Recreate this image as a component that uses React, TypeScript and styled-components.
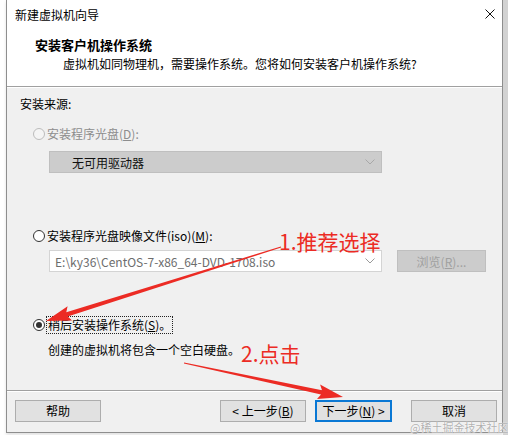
import React from "react";
import styled, { createGlobalStyle } from "styled-components";

const GlobalStyle = createGlobalStyle`
  html, body {
    margin: 0;
    padding: 0;
    background: #ffffff;
  }
  body {
    font-family: "Noto Sans CJK SC", "Noto Sans", sans-serif;
    font-size: 12px;
    color: #000;
  }
`;

type Pt = [number, number];

function arrowPolygon(s: Pt, t: Pt, head = 22, headW = 15, shaft = 4.5): string {
  const dx = t[0] - s[0];
  const dy = t[1] - s[1];
  const len = Math.hypot(dx, dy);
  const ux = dx / len;
  const uy = dy / len;
  const nx = -uy;
  const ny = ux;
  const bx = t[0] - ux * head;
  const by = t[1] - uy * head;
  const wx = bx - ux * 3;
  const wy = by - uy * 3;
  const pts: Pt[] = [
    [s[0] + nx * 0.5, s[1] + ny * 0.5],
    [bx + (nx * shaft) / 2, by + (ny * shaft) / 2],
    [wx + (nx * headW) / 2, wy + (ny * headW) / 2],
    t,
    [wx - (nx * headW) / 2, wy - (ny * headW) / 2],
    [bx - (nx * shaft) / 2, by - (ny * shaft) / 2],
    [s[0] - nx * 0.5, s[1] - ny * 0.5],
  ];
  return pts.map((p) => `${p[0].toFixed(1)},${p[1].toFixed(1)}`).join(" ");
}

export default function App() {
  return (
    <>
      <GlobalStyle />
      <Page>
        <Window>
          <TitleBar>
            <span>新建虚拟机向导</span>
            <CloseIcon width="10" height="10" viewBox="0 0 10 10">
              <path d="M0.5 0.5 L9.5 9.5 M9.5 0.5 L0.5 9.5" stroke="#111" strokeWidth="1" />
            </CloseIcon>
          </TitleBar>
          <Header>
            <Heading>安装客户机操作系统</Heading>
            <SubHeading>虚拟机如同物理机，需要操作系统。您将如何安装客户机操作系统?</SubHeading>
          </Header>
          <Etched />
          <Body>
            <SourceLabel>安装来源:</SourceLabel>

            <RadioRow $mt={14}>
              <Radio $state="disabled" />
              <RadioLabel $disabled>
                安装程序光盘(<u>D</u>):
              </RadioLabel>
            </RadioRow>
            <FieldRow $mt={9}>
              <DisabledSelect>
                <span>无可用驱动器</span>
                <Chevron color="#a8a8a8" />
              </DisabledSelect>
            </FieldRow>

            <RadioRow $mt={55}>
              <Radio $state="off" />
              <RadioLabel>
                安装程序光盘映像文件(iso)(<u>M</u>):
              </RadioLabel>
            </RadioRow>
            <FieldRow $mt={6}>
              <PathCombo>
                <span>E:\ky36\CentOS-7-x86_64-DVD-1708.iso</span>
                <Chevron color="#9a9a9a" />
              </PathCombo>
              <BrowseButton>
                浏览(<u>R</u>)...
              </BrowseButton>
            </FieldRow>

            <RadioRow $mt={45}>
              <Radio $state="on" />
              <FocusLabel>
                稍后安装操作系统(<u>S</u>)。
              </FocusLabel>
            </RadioRow>
            <Description>创建的虚拟机将包含一个空白硬盘。</Description>
          </Body>
          <Etched />
          <Footer>
            <WizardButton>帮助</WizardButton>
            <ButtonGroup>
              <WizardButton>
                &lt; 上一步(<u>B</u>)
              </WizardButton>
              <WizardButton $primary>
                下一步(<u>N</u>) &gt;
              </WizardButton>
              <WizardButton $gap={19}>取消</WizardButton>
            </ButtonGroup>
          </Footer>
        </Window>
        <SideStrip />

        <Annotation $x={279} $y={227}>1.推荐选择</Annotation>
        <Annotation $x={241} $y={339}>2.点击</Annotation>
        <ArrowLayer width="508" height="435" viewBox="0 0 508 435">
          <polygon points={arrowPolygon([281, 247], [46, 321])} fill="#ec2b24" />
          <polygon points={arrowPolygon([184, 363], [343, 397])} fill="#ec2b24" />
        </ArrowLayer>
        <Watermark>@稀土掘金技术社区</Watermark>
      </Page>
    </>
  );
}

function Chevron({ color }: { color: string }) {
  return (
    <ChevronSvg width="10" height="6" viewBox="0 0 10 6">
      <polyline points="0.5,0.5 5,5 9.5,0.5" fill="none" stroke={color} strokeWidth="1" />
    </ChevronSvg>
  );
}

const Page = styled.div`
  position: relative;
  width: 508px;
  height: 435px;
  display: flex;
  align-items: flex-start;
  overflow: hidden;
`;

const Window = styled.div`
  margin-left: 6px;
  width: 497px;
  height: 433px;
  box-sizing: border-box;
  border: 1px solid #8e8e8e;
  border-top: none;
  background: #f0f0f0;
  display: flex;
  flex-direction: column;
  box-shadow: 0 2px 3px rgba(0, 0, 0, 0.12);
`;

const SideStrip = styled.div`
  width: 5px;
  height: 435px;
  background: #d2d2d2;
`;

const TitleBar = styled.div`
  height: 28px;
  background: #ffffff;
  display: flex;
  align-items: center;
  justify-content: space-between;
  padding: 0 7px 0 8px;
  font-size: 12px;
  color: #000;
`;

const CloseIcon = styled.svg`
  display: block;
`;

const Header = styled.div`
  height: 58px;
  background: #ffffff;
  box-sizing: border-box;
  padding: 8px 0 0 28px;
  display: flex;
  flex-direction: column;
`;

const Heading = styled.div`
  font-size: 13px;
  font-weight: 700;
  height: 18px;
  line-height: 18px;
`;

const SubHeading = styled.div`
  margin-top: 2px;
  padding-left: 28px;
  font-size: 12px;
  height: 16px;
  line-height: 16px;
`;

const Etched = styled.div`
  height: 1px;
  border-top: 1px solid #a0a0a0;
  background: #ffffff;
  flex: none;
`;

const Body = styled.div`
  height: 302px;
  box-sizing: border-box;
  padding-top: 8px;
  display: flex;
  flex-direction: column;
`;

const SourceLabel = styled.div`
  margin-left: 13px;
  height: 16px;
  line-height: 16px;
`;

const RadioRow = styled.div<{ $mt: number }>`
  margin-top: ${({ $mt }) => $mt}px;
  margin-left: 26px;
  height: 16px;
  display: flex;
  align-items: center;
  gap: 2px;
`;

const Radio = styled.span<{ $state: "off" | "on" | "disabled" }>`
  width: 12px;
  height: 12px;
  box-sizing: border-box;
  border-radius: 50%;
  border: 1px solid ${({ $state }) => ($state === "disabled" ? "#bcbcbc" : "#333333")};
  background: ${({ $state }) => ($state === "disabled" ? "#f4f4f4" : "#ffffff")};
  display: flex;
  align-items: center;
  justify-content: center;
  flex: none;

  &::after {
    content: "";
    width: 6px;
    height: 6px;
    border-radius: 50%;
    background: #333333;
    display: ${({ $state }) => ($state === "on" ? "block" : "none")};
  }
`;

const RadioLabel = styled.span<{ $disabled?: boolean }>`
  color: ${({ $disabled }) => ($disabled ? "#8d8d8d" : "#000")};
  line-height: 16px;
  white-space: nowrap;
`;

const FocusLabel = styled.span`
  line-height: 16px;
  padding: 0 1px;
  margin-left: -1px;
  border: 1px dotted #222;
  white-space: nowrap;
`;

const FieldRow = styled.div<{ $mt: number }>`
  margin-top: ${({ $mt }) => $mt}px;
  margin-left: 42px;
  display: flex;
  align-items: center;
  gap: 15px;
`;

const ChevronSvg = styled.svg`
  display: block;
  flex: none;
`;

const DisabledSelect = styled.div`
  width: 333px;
  height: 22px;
  box-sizing: border-box;
  background: #cccccc;
  border: 1px solid #bfbfbf;
  display: flex;
  align-items: center;
  justify-content: space-between;
  padding: 0 6px 0 22px;
  color: #111;
`;

const PathCombo = styled.div`
  width: 333px;
  height: 22px;
  box-sizing: border-box;
  background: #ffffff;
  border: 1px solid #d4d4d4;
  display: flex;
  align-items: center;
  justify-content: space-between;
  padding: 0 6px 0 5px;
  color: #6d6d6d;
  white-space: nowrap;
`;

const BrowseButton = styled.div`
  width: 89px;
  height: 22px;
  box-sizing: border-box;
  background: #cccccc;
  border: 1px solid #bfbfbf;
  color: #a0a0a0;
  display: flex;
  align-items: center;
  justify-content: center;
`;

const Description = styled.div`
  margin-top: 9px;
  margin-left: 41px;
  height: 16px;
  line-height: 16px;
`;

const Footer = styled.div`
  flex: 1;
  display: flex;
  align-items: flex-start;
  justify-content: space-between;
  padding: 8px 5px 0 8px;
`;

const ButtonGroup = styled.div`
  display: flex;
  gap: 9px;
`;

const WizardButton = styled.div<{ $primary?: boolean; $gap?: number }>`
  width: ${({ $primary }) => ($primary ? 77 : 86)}px;
  height: 22px;
  box-sizing: border-box;
  background: #e1e1e1;
  border: ${({ $primary }) => ($primary ? "2px solid #0a78d4" : "1px solid #adadad")};
  margin-left: ${({ $gap }) => ($gap ? $gap - 9 : 0)}px;
  display: flex;
  align-items: center;
  justify-content: center;
  white-space: nowrap;
  line-height: 16px;
`;

const Annotation = styled.div<{ $x: number; $y: number }>`
  position: absolute;
  left: ${({ $x }) => $x}px;
  top: ${({ $y }) => $y}px;
  font-size: 21px;
  line-height: 28px;
  color: #ec2b24;
  white-space: nowrap;
`;

const ArrowLayer = styled.svg`
  position: absolute;
  left: 0;
  top: 0;
  pointer-events: none;
`;

const Watermark = styled.div`
  position: absolute;
  left: 410px;
  top: 421px;
  font-size: 11px;
  line-height: 12px;
  color: rgba(150, 150, 150, 0.75);
  text-shadow: 0 0 1px #fff, 0 0 1px #fff;
  white-space: nowrap;
`;
